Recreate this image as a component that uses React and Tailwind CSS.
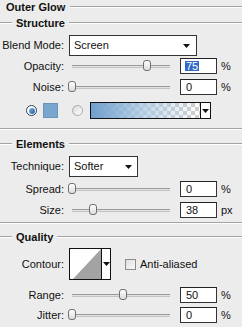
import React from 'react';

const font = { fontFamily: '"Liberation Sans", Arial, sans-serif' };

function Arrow() {
  return (
    <svg width="7" height="4" viewBox="0 0 7 4" className="block">
      <polygon points="0,0 7,0 3.5,4" fill="#111" />
    </svg>
  );
}

function Rule({ className = '' }) {
  return <div className={`h-[2px] border-t border-[#a3a3a3] border-b border-b-white ${className}`} />;
}

function GroupHeader({ title, className = '' }) {
  return (
    <div className={`flex items-center h-[14px] ${className}`}>
      <div className="w-[12px] h-[2px] border-t border-[#a3a3a3] border-b border-b-white" />
      <span className="px-[4px] font-bold text-[11px] leading-none text-[#111]">{title}</span>
      <div className="flex-1 h-[2px] border-t border-[#a3a3a3] border-b border-b-white" />
    </div>
  );
}

function Label({ children }) {
  return <div className="w-[64px] text-right text-[11px] leading-none text-[#111] shrink-0">{children}</div>;
}

function Slider({ pos }) {
  return (
    <div className="relative w-[104px] h-[12px] ml-[4px] shrink-0">
      <div className="absolute left-[4px] right-[2px] top-[5px] h-[3px] border-t border-[#9a9a9a] border-b border-b-[#c4c4c4] bg-[#e2e2e2]" />
      <div
        className="absolute top-0 w-[8px] h-[11px] rounded-[3px] border border-[#707070] bg-gradient-to-b from-white to-[#dcdcdc]"
        style={{ left: pos - 72 }}
      />
    </div>
  );
}

function NumBox({ value, selected }) {
  return (
    <div className="ml-[8px] w-[37px] h-[16px] border border-[#333] border-t-[#222] bg-white flex items-center pl-[4px] shrink-0">
      {selected ? (
        <span className="bg-[#3169c6] text-white text-[11px] leading-[10px] px-[1px]">{value}</span>
      ) : (
        <span className="text-[11px] leading-none text-[#111] pl-[1px]">{value}</span>
      )}
    </div>
  );
}

function SliderRow({ label, pos, value, unit, selected, className = '' }) {
  return (
    <div className={`flex items-center h-[16px] ${className}`}>
      <Label>{label}</Label>
      <Slider pos={pos} />
      <NumBox value={value} selected={selected} />
      <span className="ml-[4px] text-[11px] leading-none text-[#111]">{unit}</span>
    </div>
  );
}

function Radio({ on }) {
  return (
    <div
      className={`w-[11px] h-[11px] rounded-full border flex items-center justify-center shrink-0 ${
        on ? 'border-[#2d3e52] bg-white' : 'border-[#a8a8a8] bg-gradient-to-br from-[#d8d8d8] to-white'
      }`}
    >
      {on && <div className="w-[6px] h-[6px] rounded-full bg-gradient-to-br from-[#7fb4e6] to-[#1d5fa3]" />}
    </div>
  );
}

export default function App() {
  return (
    <div className="w-[242px] h-[327px] overflow-hidden bg-[#ececec] text-[#111]" style={font}>
      <div className="flex items-center h-[14px]">
        <span className="pl-[6px] pr-[5px] font-bold text-[11px] leading-none">Outer Glow</span>
        <div className="flex-1 h-[2px] border-t border-[#a3a3a3] border-b border-b-white" />
      </div>

      <GroupHeader title="Structure" className="mt-[2px]" />

      <div className="flex items-center h-[21px] mt-[5px]">
        <Label>Blend Mode:</Label>
        <div className="ml-[5px] w-[128px] h-[21px] border border-[#333] bg-white flex items-center justify-between pl-[4px] pr-[6px]">
          <span className="text-[11px] leading-none">Screen</span>
          <Arrow />
        </div>
      </div>

      <SliderRow label="Opacity:" pos={147} value="75" unit="%" selected className="mt-[2px]" />
      <SliderRow label="Noise:" pos={72} value="0" unit="%" className="mt-[5px]" />

      <div className="flex items-center h-[17px] mt-[7px]">
        <div className="ml-[26px]">
          <Radio on />
        </div>
        <div className="ml-[6px] w-[15px] h-[15px] bg-[#79a6cf] border border-[#6a95bd]" />
        <div className="ml-[14px]">
          <Radio />
        </div>
        <div className="ml-[7px] w-[121px] h-[17px] border border-[#111] flex bg-white">
          <div className="flex-1 relative bg-[repeating-conic-gradient(#cfcfcf_0_25%,#ffffff_0_50%)] bg-[length:8px_8px]">
            <div className="absolute inset-0 bg-gradient-to-r from-[#6f9fcc] via-[#a9c8e4]/70 to-transparent" />
          </div>
          <div className="w-[10px] border-l border-[#111] flex items-center justify-center">
            <Arrow />
          </div>
        </div>
      </div>

      <Rule className="mt-[9px]" />

      <GroupHeader title="Elements" className="mt-[7px]" />

      <div className="flex items-center h-[21px] mt-[5px]">
        <Label>Technique:</Label>
        <div className="ml-[5px] w-[69px] h-[21px] border border-[#333] bg-white flex items-center justify-between pl-[4px] pr-[5px]">
          <span className="text-[11px] leading-none">Softer</span>
          <Arrow />
        </div>
      </div>

      <SliderRow label="Spread:" pos={72} value="0" unit="%" className="mt-[4px]" />
      <SliderRow label="Size:" pos={93} value="38" unit="px" className="mt-[5px]" />

      <Rule className="mt-[4px]" />

      <GroupHeader title="Quality" className="mt-[6px]" />

      <div className="flex items-center h-[32px] mt-[4px]">
        <Label>Contour:</Label>
        <div className="ml-[5px] w-[42px] h-[32px] border border-[#111] bg-white flex">
          <svg width="31" height="30" viewBox="0 0 31 30" className="block">
            <polygon points="3,30 31,0 31,30" fill="#a3a3a3" />
          </svg>
          <div className="flex-1 border-l border-[#111] flex items-center justify-center">
            <Arrow />
          </div>
        </div>
        <div className="ml-[14px] w-[11px] h-[11px] border border-[#8c8c8c] bg-gradient-to-br from-[#dedede] to-[#fafafa]" />
        <span className="ml-[4px] text-[11px] leading-none">Anti-aliased</span>
      </div>

      <SliderRow label="Range:" pos={123} value="50" unit="%" className="mt-[7px]" />
      <SliderRow label="Jitter:" pos={72} value="0" unit="%" className="mt-[4px]" />
    </div>
  );
}
